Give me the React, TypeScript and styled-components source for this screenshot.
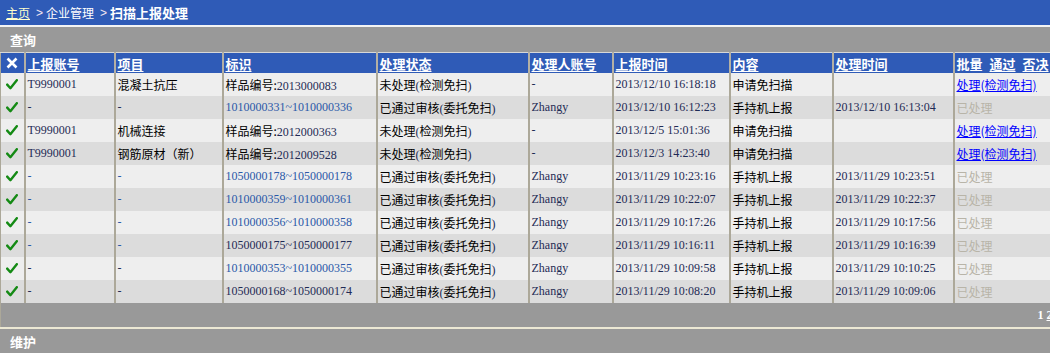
import styled, { createGlobalStyle } from "styled-components";

const GlobalStyle = createGlobalStyle`
  html, body {
    margin: 0;
    padding: 0;
    overflow: hidden;
    background: #ffffff;
  }
`;

interface RowType {
  account: string;
  item: string;
  idPrefix?: string;
  id: string;
  status: string;
  statusNote: string;
  handler: string;
  reportTime: string;
  content: string;
  handleTime: string;
  done: boolean;
  blueId?: boolean;
  blueDash?: boolean;
}

const rows: RowType[] = [
  { account: "T9990001", item: "混凝土抗压", idPrefix: "样品编号:", id: "2013000083", status: "未处理", statusNote: "检测免扫", handler: "-", reportTime: "2013/12/10 16:18:18", content: "申请免扫描", handleTime: "", done: false },
  { account: "-", item: "-", id: "1010000331~1010000336", status: "已通过审核", statusNote: "委托免扫", handler: "Zhangy", reportTime: "2013/12/10 16:12:23", content: "手持机上报", handleTime: "2013/12/10 16:13:04", done: true, blueId: true },
  { account: "T9990001", item: "机械连接", idPrefix: "样品编号:", id: "2012000363", status: "未处理", statusNote: "检测免扫", handler: "-", reportTime: "2013/12/5 15:01:36", content: "申请免扫描", handleTime: "", done: false },
  { account: "T9990001", item: "钢筋原材（新）", idPrefix: "样品编号:", id: "2012009528", status: "未处理", statusNote: "检测免扫", handler: "-", reportTime: "2013/12/3 14:23:40", content: "申请免扫描", handleTime: "", done: false },
  { account: "-", item: "-", id: "1050000178~1050000178", status: "已通过审核", statusNote: "委托免扫", handler: "Zhangy", reportTime: "2013/11/29 10:23:16", content: "手持机上报", handleTime: "2013/11/29 10:23:51", done: true, blueId: true, blueDash: true },
  { account: "-", item: "-", id: "1010000359~1010000361", status: "已通过审核", statusNote: "委托免扫", handler: "Zhangy", reportTime: "2013/11/29 10:22:07", content: "手持机上报", handleTime: "2013/11/29 10:22:37", done: true, blueId: true, blueDash: true },
  { account: "-", item: "-", id: "1010000356~1010000358", status: "已通过审核", statusNote: "委托免扫", handler: "Zhangy", reportTime: "2013/11/29 10:17:26", content: "手持机上报", handleTime: "2013/11/29 10:17:56", done: true, blueId: true, blueDash: true },
  { account: "-", item: "-", id: "1050000175~1050000177", status: "已通过审核", statusNote: "委托免扫", handler: "Zhangy", reportTime: "2013/11/29 10:16:11", content: "手持机上报", handleTime: "2013/11/29 10:16:39", done: true, blueDash: true },
  { account: "-", item: "-", id: "1010000353~1010000355", status: "已通过审核", statusNote: "委托免扫", handler: "Zhangy", reportTime: "2013/11/29 10:09:58", content: "手持机上报", handleTime: "2013/11/29 10:10:25", done: true, blueId: true },
  { account: "-", item: "-", id: "1050000168~1050000174", status: "已通过审核", statusNote: "委托免扫", handler: "Zhangy", reportTime: "2013/11/29 10:08:20", content: "手持机上报", handleTime: "2013/11/29 10:09:06", done: true },
];

const colWidths = [24, 90, 108, 154, 152, 84, 117, 103, 121, 107];

const CheckIcon = () => (
  <svg width="12" height="11" viewBox="0 0 12 11">
    <path d="M1.2 5.6 L4.4 9.2 L10.8 1.2" fill="none" stroke="#148a14" strokeWidth="2.4" strokeLinecap="round" strokeLinejoin="round" />
  </svg>
);

const CrossIcon = () => (
  <svg width="12" height="12" viewBox="0 0 12 12">
    <path d="M1.5 1.5 L10.5 10.5 M10.5 1.5 L1.5 10.5" stroke="#ffffff" strokeWidth="2.6" />
  </svg>
);

const App = () => {
  return (
    <Page>
      <GlobalStyle />
      <Breadcrumb>
        <HomeLink>主页</HomeLink>
        <Sep>&gt;</Sep>
        <span>企业管理</span>
        <Sep>&gt;</Sep>
        <Current>扫描上报处理</Current>
      </Breadcrumb>
      <SectionBar>查询</SectionBar>
      <DataTable>
        <colgroup>
          {colWidths.map((w, i) => (
            <col key={i} style={{ width: w }} />
          ))}
        </colgroup>
        <thead>
          <tr>
            <HeadCell className="icon-cell">
              <CrossIcon />
            </HeadCell>
            <HeadCell><u>上报账号</u></HeadCell>
            <HeadCell><u>项目</u></HeadCell>
            <HeadCell><u>标识</u></HeadCell>
            <HeadCell><u>处理状态</u></HeadCell>
            <HeadCell><u>处理人账号</u></HeadCell>
            <HeadCell><u>上报时间</u></HeadCell>
            <HeadCell><u>内容</u></HeadCell>
            <HeadCell><u>处理时间</u></HeadCell>
            <HeadCell>
              <BatchWrap>
                <span>批量</span>
                <u>通过</u>
                <u>否决</u>
              </BatchWrap>
            </HeadCell>
          </tr>
        </thead>
        <tbody>
          {rows.map((row, i) => (
            <BodyRow key={i} odd={i % 2 === 1}>
              <Cell className="icon-cell">
                <CheckIcon />
              </Cell>
              <Cell><Latin blue={row.blueDash}>{row.account}</Latin></Cell>
              <Cell>{row.item === "-" ? <Latin blue={row.blueDash}>-</Latin> : <Han>{row.item}</Han>}</Cell>
              <Cell>
                {row.idPrefix && <Han>{row.idPrefix}</Han>}
                <Latin blue={row.blueId}>{row.id}</Latin>
              </Cell>
              <Cell>
                <Han>{row.status}</Han>
                <Latin>(</Latin>
                <Han>{row.statusNote}</Han>
                <Latin>)</Latin>
              </Cell>
              <Cell><Latin>{row.handler}</Latin></Cell>
              <Cell><Latin>{row.reportTime}</Latin></Cell>
              <Cell><Han>{row.content}</Han></Cell>
              <Cell><Latin>{row.handleTime}</Latin></Cell>
              <Cell>
                {row.done ? (
                  <DoneText>已处理</DoneText>
                ) : (
                  <ActionLink href="#">处理(检测免扫)</ActionLink>
                )}
              </Cell>
            </BodyRow>
          ))}
          <tr>
            <PagerCell colSpan={10}>
              <span>1</span> <u>2</u>
            </PagerCell>
          </tr>
        </tbody>
      </DataTable>
      <FooterBar>维护</FooterBar>
    </Page>
  );
};

const Page = styled.div`
  width: 1060px;
  font-family: "Liberation Serif", "Noto Sans CJK SC", serif;
`;

const Breadcrumb = styled.div`
  height: 25px;
  display: flex;
  align-items: center;
  gap: 3px;
  padding-left: 6px;
  background: #2f5bb7;
  border-bottom: 2px solid #f4f4f4;
  color: #ffffff;
  font-family: "Noto Sans CJK SC", sans-serif;
  font-size: 12px;
`;

const HomeLink = styled.span`
  color: #ffffcc;
  text-decoration: underline;
`;

const Sep = styled.span`
  color: #f3e6f0;
  margin-left: 3px;
  font-family: "Liberation Sans", sans-serif;
`;

const Current = styled.span`
  font-weight: bold;
  font-size: 13px;
`;

const SectionBar = styled.div`
  height: 25px;
  display: flex;
  align-items: center;
  padding-left: 10px;
  background: #999999;
  color: #ffffff;
  font-family: "Noto Sans CJK SC", sans-serif;
  font-size: 13px;
  font-weight: bold;
`;

const DataTable = styled.table`
  width: 1060px;
  table-layout: fixed;
  border-collapse: collapse;
  border-top: 1px solid #d8d8d8;
  border-left: 1px solid #aca899;

  .icon-cell {
    padding: 0;
    text-align: center;
    svg {
      display: block;
      margin: 0 auto;
    }
  }
`;

const HeadCell = styled.th`
  height: 20px;
  padding: 0 0 0 2px;
  background: #2f5bb7;
  border-left: 2px solid #b4b0a4;
  color: #ffffff;
  font-family: "Noto Sans CJK SC", sans-serif;
  font-size: 13px;
  font-weight: bold;
  text-align: left;
  white-space: nowrap;
  overflow: hidden;

  &:first-child {
    border-left: none;
  }
  u {
    text-underline-offset: 2px;
  }
`;

const BatchWrap = styled.span`
  display: inline-flex;
  gap: 7px;
`;

const BodyRow = styled.tr<{ odd: boolean }>`
  background: ${(p) => (p.odd ? "#dcdcdc" : "#eeeeee")};
`;

const Cell = styled.td`
  height: 23px;
  padding: 0 0 0 2px;
  border-left: 2px solid #aca899;
  font-size: 12px;
  white-space: nowrap;
  overflow: hidden;

  &:first-child {
    border-left: none;
  }
`;

const Han = styled.span`
  font-family: "Noto Sans CJK SC", sans-serif;
  color: #000000;
`;

const Latin = styled.span<{ blue?: boolean }>`
  font-family: "Liberation Serif", serif;
  color: ${(p) => (p.blue ? "#2a58a8" : "#1f2b55")};
`;

const ActionLink = styled.a`
  font-family: "Noto Sans CJK SC", sans-serif;
  color: #0000ff;
  text-decoration: underline;
`;

const DoneText = styled.span`
  font-family: "Noto Sans CJK SC", sans-serif;
  color: #b8b4a8;
`;

const PagerCell = styled.td`
  height: 24px;
  padding: 0 8px 0 0;
  background: #999999;
  border-bottom: 2px solid #ece8d4;
  color: #ffffff;
  font-family: "Liberation Serif", serif;
  font-size: 12px;
  font-weight: bold;
  text-align: right;
`;

const FooterBar = styled.div`
  height: 25px;
  display: flex;
  align-items: center;
  padding-left: 10px;
  background: #999999;
  color: #ffffff;
  font-family: "Noto Sans CJK SC", sans-serif;
  font-size: 13px;
  font-weight: bold;
`;

export default App;
